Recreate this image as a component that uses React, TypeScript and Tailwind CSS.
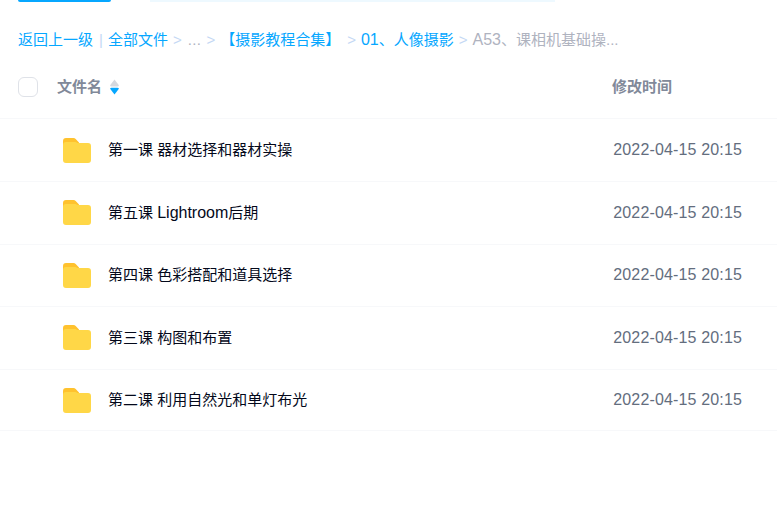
const FILES = [
  { id: 1, name: <>第一课 器材选择和器材实操</>, time: '2022-04-15 20:15' },
  { id: 5, name: <>第五课 <span className="text-base">Lightroom</span>后期</>, time: '2022-04-15 20:15' },
  { id: 4, name: <>第四课 色彩搭配和道具选择</>, time: '2022-04-15 20:15' },
  { id: 3, name: <>第三课 构图和布置</>, time: '2022-04-15 20:15' },
  { id: 2, name: <>第二课 利用自然光和单灯布光</>, time: '2022-04-15 20:15' },
]

function FolderIcon() {
  return (
    <svg width="28" height="25" viewBox="0 0 28 25" className="block">
      <path d="M0 3a3 3 0 0 1 3-3h7.500a3 3 0 0 1 2.200 1l3.300 3.500V8H0z" fill="#ffc22e" />
      <path d="M0 7a3 3 0 0 1 3-3h9.500l2 1H25a3 3 0 0 1 3 3v14a3 3 0 0 1-3 3H3a3 3 0 0 1-3-3z" fill="#ffd747" />
    </svg>
  )
}

function SortIcon() {
  return (
    <svg width="9" height="16" viewBox="0 0 9 16" className="block">
      <path d="M4.500 0.500 8.700 6Q9.200 7.500 7.500 7.500H1.500Q-0.200 7.500 0.300 6z" fill="#d5d8de" />
      <path d="M0.300 10Q-0.200 8.700 1.500 8.700H7.500Q9.200 8.700 8.700 10L4.500 15.500z" fill="#06a7ff" />
    </svg>
  )
}

function Sep() {
  return <span className="ml-[5px] text-[#c4d8f4]">&gt;</span>
}

export default function App() {
  return (
    <div className="w-[777px] h-[523px] overflow-hidden bg-white font-['Liberation_Sans','Noto_Sans_CJK_SC',sans-serif]">
      <div className="flex h-[2px] pl-[18px]">
        <div className="w-[93px] bg-[#06a7ff] rounded-b-sm" />
        <div className="w-[405px] ml-[39px] bg-[#eef9ff]" />
      </div>

      <div className="flex items-center h-[20px] mt-[28px] pl-[18px] text-[15px] text-[#06a7ff] whitespace-nowrap">
        <span>返回上一级</span>
        <span className="ml-[6px] text-[#c4d8f4]">|</span>
        <span className="ml-[5px]">全部文件</span>
        <Sep />
        <span className="ml-[6px] text-[#afb3bf] tracking-[0.4px]">...</span>
        <Sep />
        <span className="ml-[5px]">【摄影教程合集】</span>
        <span className="ml-[7px] text-[#c4d8f4]">&gt;</span>
        <span className="ml-[5px]"><span className="text-base">01</span>、人像摄影</span>
        <Sep />
        <span className="ml-[5px] text-[#afb3bf]"><span className="text-base">A53</span>、课相机基础操...</span>
      </div>

      <div className="flex items-center h-[40px] mt-[17px] pl-[18px] text-[15px] font-bold text-[#818999]">
        <div className="w-5 h-5 rounded-md border border-[#dfe2e8] bg-white" />
        <span className="ml-[19px]">文件名</span>
        <span className="ml-[8px]"><SortIcon /></span>
        <span className="ml-auto mr-[105px]">修改时间</span>
      </div>

      <div className="mt-[11.4px]">
        {FILES.map((f) => (
          <div key={f.id} className="flex items-center h-[62.6px] border-t border-[#f7f8fa] pl-[63px] pr-[35px] last:border-b">
            <FolderIcon />
            <span className="ml-[17px] text-[15px] text-[#03081a]">{f.name}</span>
            <span className="ml-auto text-base tracking-[0.15px] text-[#636d7e]">{f.time}</span>
          </div>
        ))}
      </div>
    </div>
  )
}
